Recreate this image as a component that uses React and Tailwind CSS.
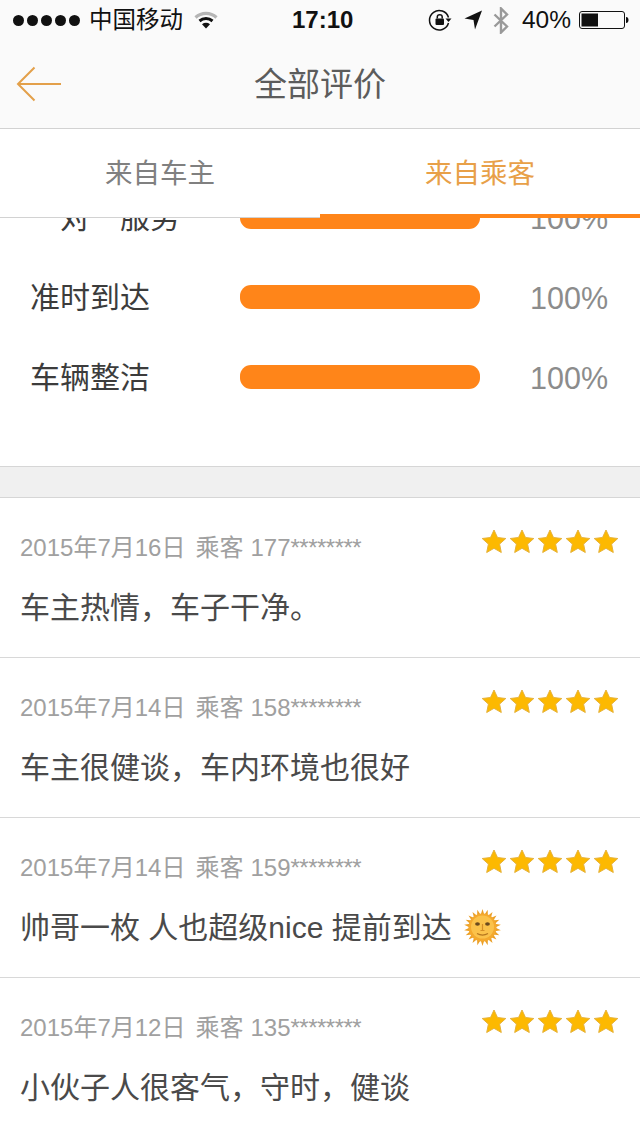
// App.jsx
const reviews = [
  { date: '2015年7月16日', phone: '177', text: '车主热情，车子干净。' },
  { date: '2015年7月14日', phone: '158', text: '车主很健谈，车内环境也很好' },
  { date: '2015年7月14日', phone: '159', text: '帅哥一枚 人也超级nice 提前到达', sun: true },
  { date: '2015年7月12日', phone: '135', text: '小伙子人很客气，守时，健谈' },
];

const ratings = [
  { label: '　对　服务' },
  { label: '准时到达' },
  { label: '车辆整洁' },
];

const Wifi = () => (
  <svg width="24" height="18" viewBox="0 0 24 18" fill="none">
    <path d="M1.500 6.500C7.500 1 16.500 1 22.500 6.500" stroke="#b5b5b5" strokeWidth="3.200" />
    <path d="M5.500 10C9.200 6.800 14.800 6.800 18.500 10" stroke="#111" strokeWidth="3" />
    <path d="M8 13.200L12 17.500L16 13.200C13.500 11.300 10.500 11.300 8 13.200Z" fill="#111" />
  </svg>
);

const RotationLock = () => (
  <svg width="24" height="24" viewBox="0 0 24 24" fill="none">
    <path d="M20.500 9.500A9.700 9.700 0 1 0 20.500 15" stroke="#111" strokeWidth="1.500" />
    <path d="M17.500 10.500H23.500L20.500 14Z" fill="#111" />
    <rect x="7.500" y="10.500" width="8.500" height="6.500" rx="1" fill="#111" />
    <path d="M9.300 10.500V8.800C9.300 5.900 14.200 5.900 14.200 8.800V10.500" stroke="#111" strokeWidth="1.500" />
  </svg>
);

const LocationArrow = () => (
  <svg width="18" height="20" viewBox="0 0 18 20">
    <path d="M0.500 8.500L18 0.500L11 19.500L9.500 10Z" fill="#111" />
  </svg>
);

const Bluetooth = () => (
  <svg width="16" height="27" viewBox="0 0 16 27" fill="none">
    <path d="M1.500 7.500L14 19.500L8 25.500V1.500L14 7.500L1.500 19.500" stroke="#999" strokeWidth="2.400" />
  </svg>
);

const Battery = () => (
  <svg width="50" height="20" viewBox="0 0 50 20" fill="none">
    <rect x="0.500" y="1.500" width="45" height="17" rx="2.500" stroke="#111" />
    <rect x="2.500" y="3.500" width="16.500" height="13" fill="#111" />
    <path d="M47 7C49 7 49.500 8.500 49.500 10C49.500 11.500 49 13 47 13Z" fill="#111" />
  </svg>
);

const BackArrow = () => (
  <svg width="46" height="36" viewBox="0 0 46 36" fill="none">
    <path d="M18.500 1.500L2 18L18.500 34.500M2 18H45" stroke="#e3a04a" strokeWidth="2" />
  </svg>
);

const Star = () => (
  <svg width="26" height="25" viewBox="0 0 26 25">
    <path
      d="M13 1L16.500 8.500L24.800 9.500L18.600 15.100L20.300 23.500L13 19.300L5.700 23.500L7.400 15.100L1.200 9.500L9.500 8.500Z"
      fill="#fdb900"
      stroke="#e6b23a"
      strokeWidth="1"
      strokeLinejoin="round"
    />
  </svg>
);

const rays = Array.from({ length: 22 }, (_, i) => (i * 360) / 22);

const Sun = () => (
  <svg width="37" height="37" viewBox="0 0 37 37">
    {rays.map((r) => (
      <path key={r} d="M18.500 0L20.400 6H16.600Z" fill="#eb9f26" transform={`rotate(${r} 18.500 18.500)`} />
    ))}
    <circle cx="18.500" cy="18.500" r="14" fill="#f4a92e" />
    <circle cx="18.500" cy="18" r="11.500" fill="#fbc24a" />
    <ellipse cx="13.500" cy="15" rx="2.400" ry="1.700" fill="#6b4a1e" />
    <ellipse cx="23.500" cy="15" rx="2.400" ry="1.700" fill="#6b4a1e" />
    <path d="M18.500 15V21.500M16.500 21.500H20.500" stroke="#d68f26" strokeWidth="1.200" fill="none" />
    <path d="M13 24.500C16.500 26.500 20.500 26.500 24 24.500" stroke="#b5761f" strokeWidth="1.300" fill="none" />
  </svg>
);

const App = () => {
  return (
    <div
      className="flex h-[1136px] w-[640px] flex-col overflow-hidden bg-white"
      style={{ fontFamily: '"Liberation Sans", "Noto Sans CJK SC", sans-serif' }}
    >
      {/* Status bar */}
      <div className="relative flex h-[40px] items-center justify-between bg-[#fafafa] pl-[13px] pr-[11px] text-[24px] text-[#111]">
        <div className="flex items-center">
          <div className="flex gap-[3px]">
            {[1, 2, 3, 4, 5].map((i) => (
              <div key={i} className="h-[11px] w-[11px] rounded-full bg-[#111]" />
            ))}
          </div>
          <span className="ml-[9px] translate-y-[1px] text-[23.500px]">中国移动</span>
          <div className="ml-[11px]">
            <Wifi />
          </div>
        </div>
        <span className="absolute left-[292px] font-bold">17:10</span>
        <div className="flex items-center">
          <RotationLock />
          <div className="ml-[12px]">
            <LocationArrow />
          </div>
          <div className="ml-[11px]">
            <Bluetooth />
          </div>
          <span className="ml-[13px] text-[24.500px]">40%</span>
          <div className="ml-[8px]">
            <Battery />
          </div>
        </div>
      </div>

      {/* Nav bar */}
      <div className="relative flex h-[89px] items-center justify-center border-b border-[#d2d2d2] bg-[#fafafa] pt-[2px]">
        <div className="absolute left-[16px] top-[26px]">
          <BackArrow />
        </div>
        <span className="text-[33px] text-[#5c5c5c]">全部评价</span>
      </div>

      {/* Tabs */}
      <div className="relative flex h-[89px] shrink-0 border-b border-[#d2d2d2] bg-white text-[27.500px]">
        <div className="flex flex-1 items-center justify-center pt-[2px] text-[#808080]">来自车主</div>
        <div className="flex flex-1 items-center justify-center pt-[2px] text-[#e8a048]">来自乘客</div>
        <div className="absolute -bottom-[1px] right-0 z-10 h-[4px] w-[320px] bg-[#ff8519]" />
      </div>

      {/* Scrolled content */}
      <div className="flex-1 overflow-hidden">
        <div className="-mt-[41px]">
          <div className="pb-[49px]">
            {ratings.map((r) => (
              <div key={r.label} className="flex h-[80px] items-center pl-[30px] text-[30px]">
                <span className="w-[210px] whitespace-pre text-[#3c3c3c]">{r.label}</span>
                <div className="h-[24px] w-[240px] rounded-[11px] bg-[#ff8519]" />
                <span className="ml-[50px] pt-[3px] text-[30.500px] text-[#8c8c8c]">100%</span>
              </div>
            ))}
          </div>
          <div className="h-[32px] border-y border-[#d6d6d6] bg-[#f0f0f0]" />
          {reviews.map((r, i) => (
            <div key={i} className="h-[160px] border-b border-[#d8d8d8] px-5 pt-[31px]">
              <div className="flex items-start justify-between">
                <div className="pt-[2px] text-[24px] leading-[34px] text-[#a0a0a0]">
                  <span>{r.date}</span>
                  <span className="ml-[10px]">乘客</span>
                  <span className="ml-[7px]">{r.phone}</span>
                  <span className="tracking-[-0.5px]">********</span>
                </div>
                <div className="mr-[1px] flex gap-[2px]">
                  {[1, 2, 3, 4, 5].map((s) => (
                    <Star key={s} />
                  ))}
                </div>
              </div>
              <div className="mt-[22px] flex h-[40px] items-center text-[30px] text-[#4a4a4a]">
                <span>{r.text}</span>
                {r.sun && (
                  <div className="ml-[12px]">
                    <Sun />
                  </div>
                )}
              </div>
            </div>
          ))}
        </div>
      </div>
    </div>
  );
};

export default App;
